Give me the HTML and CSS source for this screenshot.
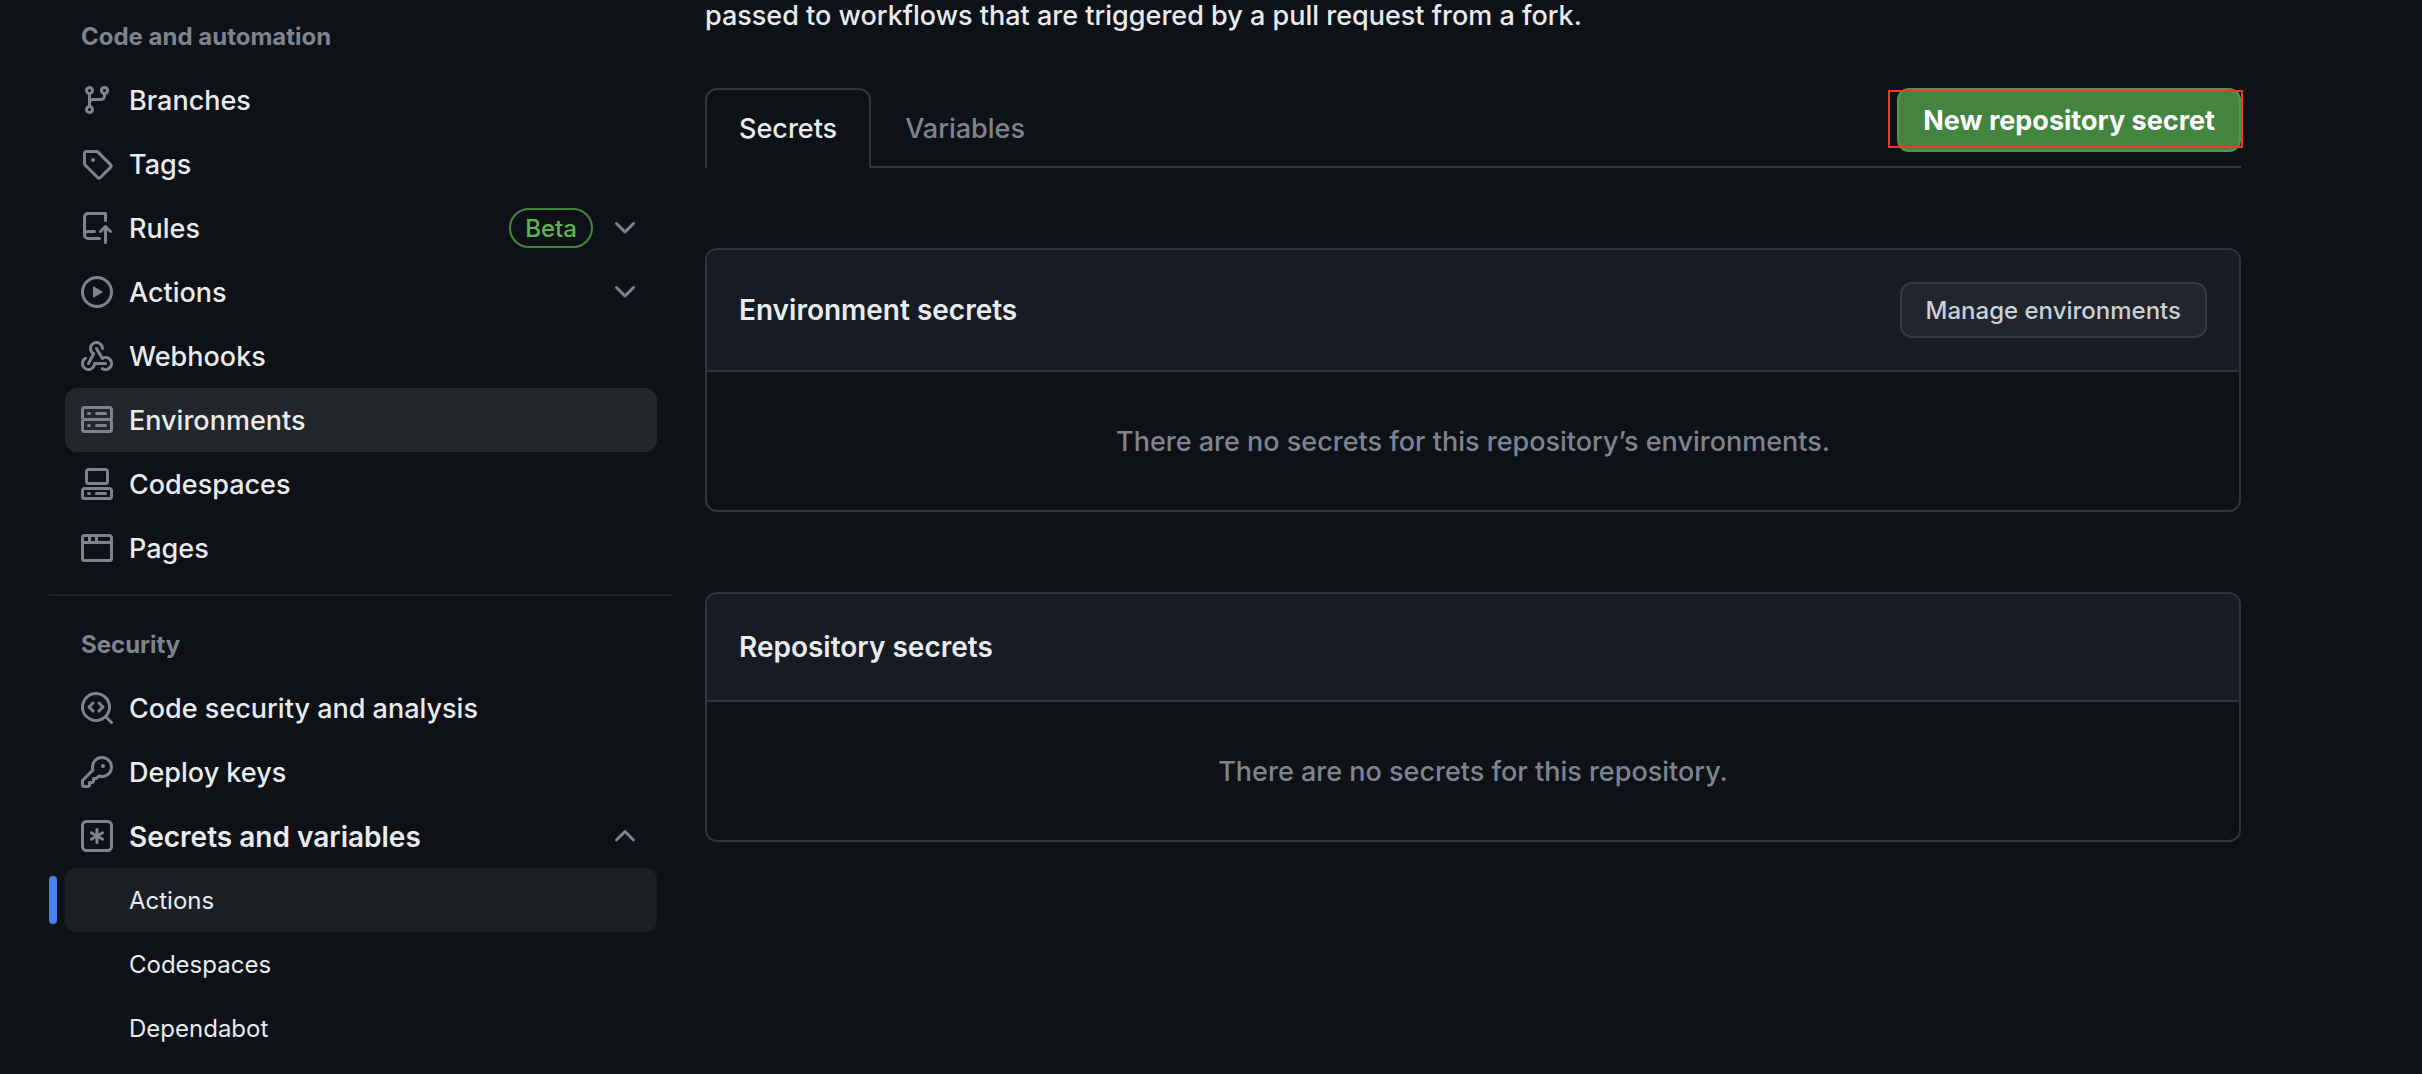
FILE: index.html
```html
<!DOCTYPE html>
<html lang="en">
<head>
<meta charset="utf-8">
<title>Actions secrets</title>
<link rel="stylesheet" href="styles.css">
</head>
<body>
<div class="layout">
  <nav class="sidebar" aria-label="Repository settings">
    <section class="nav-group">
      <h2 class="nav-heading">Code and automation</h2>
      <ul class="nav-list">
        <li><a class="nav-item" href="#branches"><svg class="icon" viewBox="0 0 16 16" aria-hidden="true"><path d="M9.5 3.25a2.25 2.25 0 1 1 3 2.122V6A2.5 2.5 0 0 1 10 8.5H6a1 1 0 0 0-1 1v1.128a2.251 2.251 0 1 1-1.5 0V5.372a2.25 2.25 0 1 1 1.5 0v1.836A2.493 2.493 0 0 1 6 7h4a1 1 0 0 0 1-1v-.628A2.25 2.25 0 0 1 9.5 3.25Zm-6 0a.75.75 0 1 0 1.5 0 .75.75 0 0 0-1.5 0Zm8.25-.75a.75.75 0 1 0 0 1.5.75.75 0 0 0 0-1.5ZM4.25 12a.75.75 0 1 0 0 1.5.75.75 0 0 0 0-1.5Z"/></svg><span class="nav-label">Branches</span></a></li>
        <li><a class="nav-item" href="#tags"><svg class="icon" viewBox="0 0 16 16" aria-hidden="true"><path d="M1 7.775V2.75C1 1.784 1.784 1 2.75 1h5.025c.464 0 .91.184 1.238.513l6.25 6.25a1.75 1.75 0 0 1 0 2.474l-5.026 5.026a1.75 1.75 0 0 1-2.474 0l-6.25-6.25A1.752 1.752 0 0 1 1 7.775Zm1.5 0c0 .066.026.13.073.177l6.25 6.25a.25.25 0 0 0 .354 0l5.025-5.025a.25.25 0 0 0 0-.354l-6.25-6.25a.25.25 0 0 0-.177-.073H2.75a.25.25 0 0 0-.25.25ZM6 5a1 1 0 1 1 0 2 1 1 0 0 1 0-2Z"/></svg><span class="nav-label">Tags</span></a></li>
        <li><button class="nav-item" type="button" aria-expanded="false"><svg class="icon" viewBox="0 0 16 16" aria-hidden="true"><path d="M1 2.5A2.5 2.5 0 0 1 3.5 0h8.75a.75.75 0 0 1 .75.75v3.5a.75.75 0 0 1-1.5 0V1.5h-8a1 1 0 0 0-1 1v6.708A2.493 2.493 0 0 1 3.5 9h3.25a.75.75 0 0 1 0 1.5H3.5a1 1 0 0 0 0 2h5.75a.75.75 0 0 1 0 1.5H3.5A2.5 2.5 0 0 1 1 11.5Zm13.23 7.79-1.225-1.224v6.184a.75.75 0 0 1-1.5 0V9.066L10.28 10.29a.75.75 0 0 1-1.06-1.061l2.505-2.504a.75.75 0 0 1 1.06 0L15.29 9.23a.751.751 0 0 1-.018 1.042.751.751 0 0 1-1.042.018Z"/></svg><span class="nav-label">Rules</span><span class="beta">Beta</span><svg class="icon" viewBox="0 0 16 16" aria-hidden="true"><path d="M12.78 5.22a.749.749 0 0 1 0 1.06l-4.25 4.25a.749.749 0 0 1-1.06 0L3.22 6.28a.749.749 0 1 1 1.06-1.06L8 8.939l3.72-3.719a.749.749 0 0 1 1.06 0Z"/></svg></button></li>
        <li><button class="nav-item" type="button" aria-expanded="false"><svg class="icon" viewBox="0 0 16 16" aria-hidden="true"><path d="M8 0a8 8 0 1 1 0 16A8 8 0 0 1 8 0ZM1.5 8a6.5 6.5 0 1 0 13 0 6.5 6.5 0 0 0-13 0Zm4.879-2.773 4.264 2.559a.25.25 0 0 1 0 .428l-4.264 2.559A.25.25 0 0 1 6 10.559V5.442a.25.25 0 0 1 .379-.215Z"/></svg><span class="nav-label">Actions</span><svg class="icon" viewBox="0 0 16 16" aria-hidden="true"><path d="M12.78 5.22a.749.749 0 0 1 0 1.06l-4.25 4.25a.749.749 0 0 1-1.06 0L3.22 6.28a.749.749 0 1 1 1.06-1.06L8 8.939l3.72-3.719a.749.749 0 0 1 1.06 0Z"/></svg></button></li>
        <li><a class="nav-item" href="#webhooks"><svg class="icon" viewBox="0 0 16 16" aria-hidden="true"><path d="M5.5 4.25a2.25 2.25 0 0 1 4.5 0 .75.75 0 0 0 1.5 0 3.75 3.75 0 1 0-6.14 2.889l-2.272 4.258a.75.75 0 0 0 1.324.706L7 7.25a.75.75 0 0 0-.309-1.015A2.25 2.25 0 0 1 5.5 4.25Z"/><path d="M7.364 3.607a.75.75 0 0 1 1.03.257l2.608 4.349a3.75 3.75 0 1 1-.628 6.785.75.75 0 0 1 .752-1.299 2.25 2.25 0 1 0-.033-3.88.75.75 0 0 1-1.03-.256L7.107 4.636a.75.75 0 0 1 .257-1.03Z"/><path d="M2.9 8.776A.75.75 0 0 1 2.625 9.8 2.25 2.25 0 1 0 6 11.75a.75.75 0 0 1 .75-.751h5.5a.75.75 0 0 1 0 1.5H7.425a3.751 3.751 0 1 1-5.55-3.998.75.75 0 0 1 1.024.274Z"/></svg><span class="nav-label">Webhooks</span></a></li>
        <li><a class="nav-item nav-item-hover" href="#environments"><svg class="icon" viewBox="0 0 16 16" aria-hidden="true"><path d="M1.75 1h12.5c.966 0 1.75.784 1.75 1.75v4c0 .372-.116.717-.314 1 .198.283.314.628.314 1v4a1.75 1.75 0 0 1-1.75 1.75H1.75A1.75 1.75 0 0 1 0 12.75v-4c0-.358.109-.707.314-1a1.739 1.739 0 0 1-.314-1v-4C0 1.784.784 1 1.75 1ZM1.5 2.75v4c0 .138.112.25.25.25h12.5a.25.25 0 0 0 .25-.25v-4a.25.25 0 0 0-.25-.25H1.75a.25.25 0 0 0-.25.25Zm.25 5.75a.25.25 0 0 0-.25.25v4c0 .138.112.25.25.25h12.5a.25.25 0 0 0 .25-.25v-4a.25.25 0 0 0-.25-.25ZM7 4.75A.75.75 0 0 1 7.75 4h4.5a.75.75 0 0 1 0 1.5h-4.5A.75.75 0 0 1 7 4.75ZM7.75 10h4.5a.75.75 0 0 1 0 1.5h-4.5a.75.75 0 0 1 0-1.5ZM3 4.75A.75.75 0 0 1 3.75 4h.5a.75.75 0 0 1 0 1.5h-.5A.75.75 0 0 1 3 4.75ZM3.75 10h.5a.75.75 0 0 1 0 1.5h-.5a.75.75 0 0 1 0-1.5Z"/></svg><span class="nav-label">Environments</span></a></li>
        <li><a class="nav-item" href="#codespaces"><svg class="icon" viewBox="0 0 16 16" aria-hidden="true"><path d="M0 11.25c0-.966.784-1.75 1.75-1.75h12.5c.966 0 1.75.784 1.75 1.75v3A1.75 1.75 0 0 1 14.25 16H1.75A1.75 1.75 0 0 1 0 14.25Zm2-9.5C2 .784 2.784 0 3.75 0h8.5C13.216 0 14 .784 14 1.75v5a1.75 1.75 0 0 1-1.75 1.75h-8.5A1.75 1.75 0 0 1 2 6.75Zm1.75-.25a.25.25 0 0 0-.25.25v5c0 .138.112.25.25.25h8.5a.25.25 0 0 0 .25-.25v-5a.25.25 0 0 0-.25-.25Zm-2 9.5a.25.25 0 0 0-.25.25v3c0 .138.112.25.25.25h12.5a.25.25 0 0 0 .25-.25v-3a.25.25 0 0 0-.25-.25Z"/><path d="M7 12.75a.75.75 0 0 1 .75-.75h4.5a.75.75 0 0 1 0 1.5h-4.5a.75.75 0 0 1-.75-.75Zm-4 0a.75.75 0 0 1 .75-.75h.5a.75.75 0 0 1 0 1.5h-.5a.75.75 0 0 1-.75-.75Z"/></svg><span class="nav-label">Codespaces</span></a></li>
        <li><a class="nav-item" href="#pages"><svg class="icon" viewBox="0 0 16 16" aria-hidden="true"><path d="M0 2.75C0 1.784.784 1 1.75 1h12.5c.966 0 1.75.784 1.75 1.75v10.5A1.75 1.75 0 0 1 14.25 15H1.75A1.75 1.75 0 0 1 0 13.25ZM14.5 6h-13v7.25c0 .138.112.25.25.25h12.5a.25.25 0 0 0 .25-.25Zm-6-3.5v2h6V2.75a.25.25 0 0 0-.25-.25ZM5 2.5v2h2v-2Zm-3.25 0a.25.25 0 0 0-.25.25V4.5h2v-2Z"/></svg><span class="nav-label">Pages</span></a></li>
      </ul>
    </section>
    <section class="nav-group nav-group-divided">
      <h2 class="nav-heading">Security</h2>
      <ul class="nav-list">
        <li><a class="nav-item" href="#analysis"><svg class="icon" viewBox="0 0 16 16" aria-hidden="true"><path d="M8.47 4.97a.75.75 0 0 0 0 1.06L9.94 7.5 8.47 8.97a.75.75 0 1 0 1.06 1.06l2-2a.75.75 0 0 0 0-1.06l-2-2a.75.75 0 0 0-1.06 0ZM6.53 6.03a.75.75 0 0 0-1.06-1.06l-2 2a.75.75 0 0 0 0 1.06l2 2a.75.75 0 1 0 1.06-1.06L5.06 7.5l1.47-1.47Z"/><path d="M12.246 13.307a7.501 7.501 0 1 1 1.06-1.06l2.474 2.473a.749.749 0 1 1-1.06 1.06l-2.474-2.473ZM1.5 7.5a6.002 6.002 0 0 0 3.608 5.504 6.002 6.002 0 0 0 6.486-1.117.748.748 0 0 1 .292-.293A6 6 0 1 0 1.5 7.5Z"/></svg><span class="nav-label">Code security and analysis</span></a></li>
        <li><a class="nav-item" href="#keys"><svg class="icon" viewBox="0 0 16 16" aria-hidden="true"><path d="M10.5 0a5.499 5.499 0 1 1-1.288 10.848l-.932.932a.749.749 0 0 1-.53.22H7v.75a.749.749 0 0 1-.22.53l-.5.5a.749.749 0 0 1-.53.22H5v.75a.749.749 0 0 1-.22.53l-.5.5a.749.749 0 0 1-.53.22h-2A1.75 1.75 0 0 1 0 14.25v-2c0-.199.079-.389.22-.53l4.932-4.932A5.5 5.5 0 0 1 10.5 0Zm-4 5.5c-.001.431.069.86.205 1.269a.75.75 0 0 1-.181.768L1.5 12.56v1.69c0 .138.112.25.25.25h1.69l.06-.06v-1.19a.75.75 0 0 1 .75-.75h1.19l.06-.06v-1.19a.75.75 0 0 1 .75-.75h1.19l1.023-1.025a.75.75 0 0 1 .768-.18A4 4 0 1 0 6.5 5.5ZM11 6a1 1 0 1 1 0-2 1 1 0 0 1 0 2Z"/></svg><span class="nav-label">Deploy keys</span></a></li>
        <li>
          <button class="nav-item nav-item-open" type="button" aria-expanded="true"><svg class="icon" viewBox="0 0 16 16" aria-hidden="true"><path d="M0 2.75A2.75 2.75 0 0 1 2.75 0h10.5A2.75 2.75 0 0 1 16 2.75v10.5A2.75 2.75 0 0 1 13.25 16H2.75A2.75 2.75 0 0 1 0 13.25ZM2.75 1.5c-.69 0-1.25.56-1.25 1.25v10.5c0 .69.56 1.25 1.25 1.25h10.5c.69 0 1.25-.56 1.25-1.25V2.75c0-.69-.56-1.25-1.25-1.25Z" fill-rule="evenodd"/><path d="M8 4a.75.75 0 0 1 .75.75V6.7l1.69-.975a.75.75 0 0 1 .75 1.3L9.5 8l1.69.976a.75.75 0 0 1-.75 1.298L8.75 9.3v1.951a.75.75 0 0 1-1.5 0V9.299l-1.69.976a.75.75 0 0 1-.75-1.3L6.5 8l-1.69-.975a.75.75 0 0 1 .75-1.3l1.69.976V4.75A.75.75 0 0 1 8 4Z"/></svg><span class="nav-label">Secrets and variables</span><svg class="icon" viewBox="0 0 16 16" aria-hidden="true"><path d="M3.22 10.53a.749.749 0 0 1 0-1.06l4.25-4.25a.749.749 0 0 1 1.06 0l4.25 4.25a.749.749 0 1 1-1.06 1.06L8 6.811 4.28 10.53a.749.749 0 0 1-1.06 0Z"/></svg></button>
          <ul class="nav-sublist">
            <li><a class="nav-item nav-subitem nav-item-current" href="#secrets-actions" aria-current="page"><span class="nav-label">Actions</span></a></li>
            <li><a class="nav-item nav-subitem" href="#secrets-codespaces"><span class="nav-label">Codespaces</span></a></li>
            <li><a class="nav-item nav-subitem" href="#secrets-dependabot"><span class="nav-label">Dependabot</span></a></li>
          </ul>
        </li>
      </ul>
    </section>
  </nav>

  <main class="content">
    <p class="intro">passed to workflows that are triggered by a pull request from a fork.</p>
    <div class="tabbar">
      <nav class="tabs" aria-label="Secrets and variables">
        <a class="tab tab-selected" href="#secrets" aria-current="page">Secrets</a>
        <a class="tab" href="#variables">Variables</a>
      </nav>
      <div class="callout">
        <button class="btn btn-primary" type="button">New repository secret</button>
      </div>
    </div>

    <section class="card">
      <header class="card-header">
        <h3 class="card-title">Environment secrets</h3>
        <button class="btn" type="button">Manage environments</button>
      </header>
      <p class="card-empty">There are no secrets for this repository’s environments.</p>
    </section>

    <section class="card">
      <header class="card-header">
        <h3 class="card-title">Repository secrets</h3>
      </header>
      <p class="card-empty">There are no secrets for this repository.</p>
    </section>
  </main>
</div>
</body>
</html>
```
FILE: styles.css
```css
:root {
  --bg: #0e1116;
  --bg-subtle: #171b23;
  --text: #e8ebf0;
  --muted: #7e848f;
  --border: #313439;
}

* {
  box-sizing: border-box;
}

body {
  margin: 0;
  background: var(--bg);
  color: var(--text);
  font-family: Inter, "Liberation Sans", sans-serif;
  font-size: 27px;
  font-weight: 450;
  line-height: 42px;
}

h2, h3, p, ul {
  margin: 0;
  padding: 0;
}

ul {
  list-style: none;
}

a {
  color: inherit;
  text-decoration: none;
}

button {
  font: inherit;
  color: inherit;
  cursor: pointer;
}

.layout {
  display: flex;
  gap: 32px;
  padding: 0 181px 0 49px;
}

/* Sidebar */
.sidebar {
  flex: 0 0 624px;
  padding-top: 18px;
}

.nav-group-divided {
  margin-top: 14px;
  padding-top: 30px;
  border-top: 2px solid #1e2227;
}

.nav-heading {
  padding: 1px 32px 13px;
  color: var(--muted);
  font-size: 24px;
  font-weight: 700;
  line-height: 36px;
}

.nav-list {
  padding: 0 16px;
}

.nav-item {
  position: relative;
  display: flex;
  align-items: center;
  gap: 16px;
  width: 100%;
  height: 64px;
  padding: 0 16px;
  border: 0;
  border-radius: 12px;
  background: transparent;
  text-align: left;
}

.nav-item-hover {
  background: #23262b;
}

.nav-item-open {
  font-size: 28px;
  font-weight: 600;
}

.nav-label {
  flex: 1;
  padding-top: 2px;
}

.nav-subitem {
  padding-left: 64px;
  font-size: 24px;
  font-weight: 400;
}

.nav-item-current {
  background: #1c1f24;
}

.nav-item-current::before {
  content: "";
  position: absolute;
  top: 8px;
  left: -16px;
  width: 8px;
  height: 48px;
  border-radius: 12px;
  background: #4782f0;
}

.icon {
  flex: none;
  width: 32px;
  height: 32px;
  fill: var(--muted);
}

.beta {
  padding: 1px 14px 0;
  border: 2px solid #43873f;
  border-radius: 20px;
  color: #62b457;
  font-size: 24px;
  font-weight: 500;
  line-height: 35px;
}

/* Main column */
.content {
  flex: 1;
  min-width: 0;
}

.intro {
  margin-bottom: 56px;
  line-height: 32px;
}

.tabbar {
  display: flex;
  justify-content: space-between;
  align-items: flex-start;
  height: 80px;
  margin-bottom: 80px;
  border-bottom: 2px solid var(--border);
}

.tabs {
  display: flex;
}

.tab {
  height: 80px;
  padding: 18px 32px;
  border: 2px solid transparent;
  border-bottom: 0;
  color: var(--muted);
}

.tab-selected {
  border-color: var(--border);
  border-radius: 12px 12px 0 0;
  background: var(--bg);
  color: var(--text);
}

.btn {
  height: 56px;
  padding: 1px 24px 0;
  border: 2px solid #373a41;
  border-radius: 12px;
  background: #22252d;
  color: #c9d0d8;
  font-size: 24px;
  font-weight: 500;
  line-height: 40px;
}

.btn-primary {
  height: 64px;
  border-color: #56915a;
  background: #438440;
  color: #fff;
  font-size: 27px;
  font-weight: 700;
}

.callout {
  position: relative;
  display: flex;
}

.callout::after {
  content: "";
  position: absolute;
  top: 2px;
  right: -2px;
  bottom: 4px;
  left: -9px;
  border: 2px solid #ee3a1f;
  pointer-events: none;
}

.card {
  margin-bottom: 80px;
  border: 2px solid var(--border);
  border-radius: 12px;
  overflow: hidden;
}

.card-header {
  display: flex;
  justify-content: space-between;
  align-items: center;
  padding: 32px;
  border-bottom: 2px solid var(--border);
  background: var(--bg-subtle);
}

.card-title {
  font-size: 28px;
  font-weight: 600;
}

.card-empty {
  padding: 49px 32px 47px;
  color: var(--muted);
  text-align: center;
}
```
